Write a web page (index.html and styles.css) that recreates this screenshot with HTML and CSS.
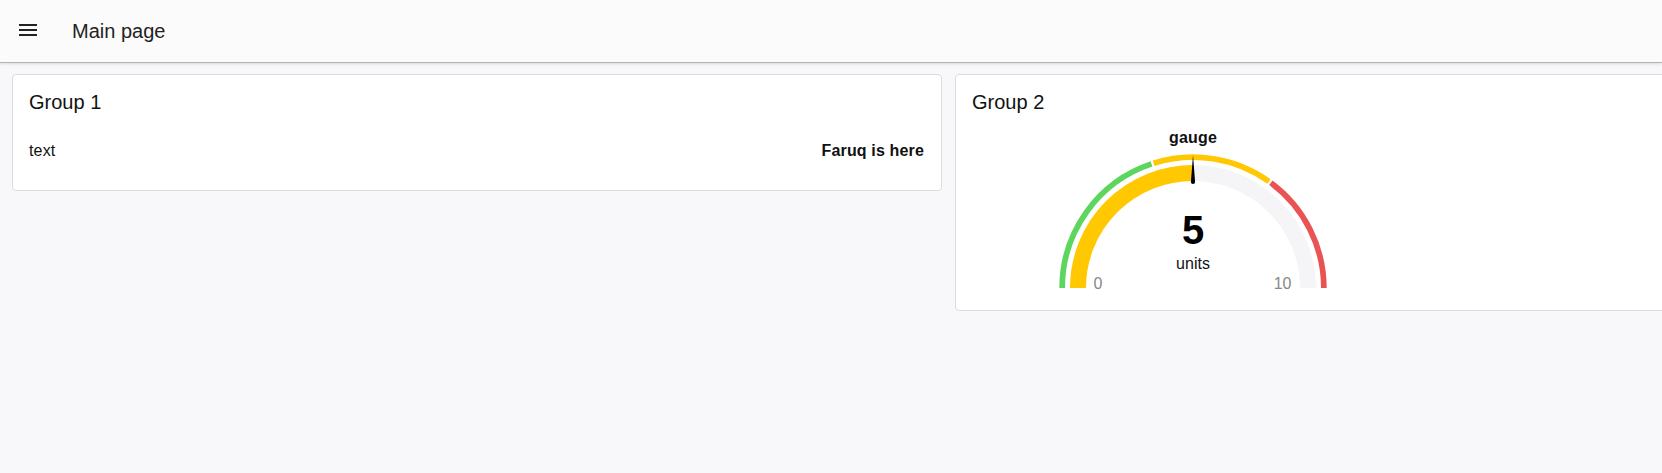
FILE: index.html
```html
<!DOCTYPE html>
<html lang="en">
<head>
  <meta charset="UTF-8" />
  <meta name="viewport" content="width=device-width, initial-scale=1.0" />
  <title>Main page</title>
  <link rel="stylesheet" href="styles.css">
</head>
<body>
  <!-- Top app bar -->
  <header class="appbar">
    <svg class="menu-icon" viewBox="0 0 24 24" width="24" height="24" aria-hidden="true">
      <path d="M3,6H21V8H3V6M3,11H21V13H3V11M3,16H21V18H3V16Z" />
    </svg>
    <h1 class="page-title">Main page</h1>
  </header>

  <main class="groups">
    <!-- Group 1: text widget -->
    <section class="group">
      <h2 class="group-title">Group 1</h2>
      <div class="widget text-row">
        <span class="label">text</span>
        <span class="value">Faruq is here</span>
      </div>
    </section>

    <!-- Group 2: gauge widget -->
    <section class="group">
      <h2 class="group-title">Group 2</h2>
      <div class="widget gauge">
        <div class="gauge-title">gauge</div>
        <svg class="gauge-svg" viewBox="0 0 280 144" width="280" height="144">
          <!-- segments -->
          <path class="seg green" d="M9.15 138 A130.85 130.85 0 0 1 98.48 13.91" />
          <path class="seg yellow" d="M100.65 13.21 A130.85 130.85 0 0 1 215.98 31.47" />
          <path class="seg red" d="M217.83 32.81 A130.85 130.85 0 0 1 270.85 138" />
          <!-- value band -->
          <path class="band track" d="M140 23 A115 115 0 0 1 255 138" />
          <path class="band fill" d="M25 138 A115 115 0 0 1 140 23" />
          <!-- needle -->
          <path class="needle" d="M140 5 L142.1 32 A2.1 2.1 0 0 1 137.9 32 Z" />
          <text class="gauge-value" x="140" y="94">5</text>
          <text class="gauge-units" x="140" y="119">units</text>
          <text class="gauge-min" x="40.5" y="138.5">0</text>
          <text class="gauge-max" x="238.5" y="138.5">10</text>
        </svg>
      </div>
    </section>
  </main>
</body>
</html>
```

FILE: styles.css
```css
:root {
  --bg: #f8f8fa;
  --card-border: #dcdce0;
  --green: #5cd65c;
  --yellow: #ffc800;
  --red: #ea5353;
  --track: #f5f5f7;
}

* {
  box-sizing: border-box;
}

body {
  margin: 0;
  font-family: "Liberation Sans", Arial, Helvetica, sans-serif;
  color: #111;
  background: var(--bg);
  overflow: hidden;
}

h1,
h2 {
  margin: 0;
  font-weight: 400;
}

/* ----------- APP BAR ----------- */
.appbar {
  height: 63px;
  display: flex;
  align-items: center;
  padding: 0 16px 3px;
  background: #fbfbfb;
  border-bottom: 1px solid #b4b4b4;
  box-shadow: 0 1px 3px rgba(0, 0, 0, 0.12);
  position: relative;
}

.menu-icon {
  fill: #222;
  flex: none;
}

.page-title {
  margin-left: 32px;
  margin-top: 2px;
  font-size: 20px;
  line-height: 24px;
  color: #222;
}

/* ----------- GROUPS ----------- */
.groups {
  display: flex;
  gap: 13px;
  align-items: flex-start;
  padding: 11px 12px 12px;
}

.group {
  flex: none;
  width: 930px;
  background: #fff;
  border: 1px solid var(--card-border);
  border-radius: 4px;
  padding: 15px 16px 16px;
}

.group-title {
  font-size: 20px;
  line-height: 24px;
  margin-bottom: 12px;
}

.widget {
  font-size: 16px;
  letter-spacing: 0.15px;
}

/* --- text widget --- */
.text-row {
  height: 48px;
  display: flex;
  align-items: center;
  justify-content: space-between;
  padding-top: 2px;
  padding-right: 1px;
}

.text-row .value {
  font-weight: 700;
}

/* --- gauge widget --- */
.gauge {
  width: 442px;
  display: flex;
  flex-direction: column;
  align-items: center;
}

.gauge-title {
  font-weight: 700;
  line-height: 24px;
}

.gauge-svg {
  display: block;
}

.seg {
  fill: none;
  stroke-width: 5.7;
}

.green { stroke: var(--green); }
.yellow { stroke: var(--yellow); }
.red { stroke: var(--red); }

.band {
  fill: none;
  stroke-width: 16;
}

.band.track { stroke: var(--track); }
.band.fill { stroke: var(--yellow); }

.needle {
  fill: #000;
}

.gauge-svg text {
  font-family: "Liberation Sans", Arial, Helvetica, sans-serif;
  letter-spacing: 0;
}

.gauge-value {
  font-size: 40px;
  font-weight: 700;
  text-anchor: middle;
  fill: #000;
}

.gauge-units {
  font-size: 16px;
  text-anchor: middle;
  fill: #111;
}

.gauge-min,
.gauge-max {
  font-size: 16px;
  fill: #888;
}

.gauge-max {
  text-anchor: end;
}
```
